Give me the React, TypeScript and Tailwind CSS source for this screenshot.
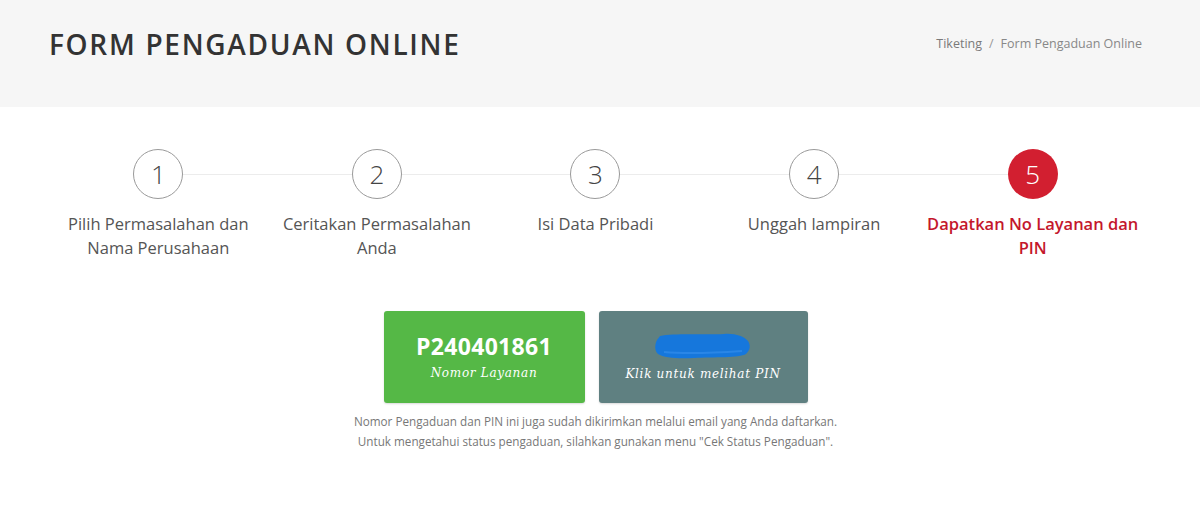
const steps = [
  { no: 1, label: ["Pilih Permasalahan dan", "Nama Perusahaan"] },
  { no: 2, label: ["Ceritakan Permasalahan", "Anda"] },
  { no: 3, label: ["Isi Data Pribadi"] },
  { no: 4, label: ["Unggah lampiran"] },
  { no: 5, label: ["Dapatkan No Layanan dan", "PIN"] },
];

function Step({ no, label, last }: { no: number; label: string[]; last: boolean }) {
  const active = no === 5;
  return (
    <div className="relative flex flex-col items-center">
      {!last && <div className="absolute left-1/2 top-[25px] h-px w-full bg-[#ececec]" />}
      <div
        className={`relative z-10 flex h-[50px] w-[50px] items-center justify-center rounded-full text-[26px] font-light ${
          active ? "bg-[#d21f30] text-white" : "border border-[#9a9a9a] bg-white text-[#444]"
        }`}
      >
        {no}
      </div>
      <div
        className={`mt-[13px] text-center text-[16.5px] leading-[24px] ${
          active ? "font-semibold text-[#c4172c]" : "text-[#555]"
        }`}
      >
        {label.map((l) => (
          <div key={l}>{l}</div>
        ))}
      </div>
    </div>
  );
}

export default function App() {
  return (
    <div className="min-h-[515px] w-[1200px] bg-white font-['Open_Sans',sans-serif]">
      <div className="h-[107px] bg-[#f6f6f6]">
        <div className="ml-[49px] flex h-[88px] w-[1093px] items-center justify-between">
          <h1 className="text-[28px] font-semibold tracking-[1.7px] text-[#333]">FORM PENGADUAN ONLINE</h1>
          <div className="flex items-center gap-[7px] text-[12.5px] text-[#7a7a7a]">
            <span>Tiketing</span>
            <span className="text-[#999]">/</span>
            <span className="text-[#888]">Form Pengaduan Online</span>
          </div>
        </div>
      </div>

      <div className="ml-[49px] w-[1093px]">
        <div className="mt-[42px] grid grid-cols-5">
          {steps.map((s, i) => (
            <Step key={s.no} no={s.no} label={s.label} last={i === steps.length - 1} />
          ))}
        </div>

        <div className="mt-[51px] flex justify-center gap-[14px]">
          <div className="flex h-[92px] w-[201px] flex-col items-center justify-center rounded-[3px] bg-[#55b846] text-white shadow-[0_1px_2px_rgba(0,0,0,0.15)]">
            <div className="text-[23px] font-bold leading-[28px] tracking-[0.3px]">P240401861</div>
            <div className="mt-[4px] font-['DejaVu_Serif',serif] text-[12px] italic tracking-[0.7px]">Nomor Layanan</div>
          </div>
          <div className="flex h-[92px] w-[209px] flex-col items-center justify-center rounded-[3px] bg-[#5f8081] text-white shadow-[0_1px_2px_rgba(0,0,0,0.15)]">
            <svg width="98" height="28" viewBox="0 0 98 28" className="mb-[5px]">
              <path
                d="M6 4 C20 1, 50 3, 70 2 C80 1, 90 4, 94 9 C97 14, 96 18, 92 22 C85 26, 60 25, 40 26 C25 27, 10 26, 4 22 C0 18, 1 12, 3 8 Z"
                fill="#1677dc"
              />
              <path d="M10 20 C30 22, 60 21, 88 19" stroke="#2a86e6" strokeWidth="2" fill="none" />
            </svg>
            <div className="font-['DejaVu_Serif',serif] text-[12px] italic tracking-[0.7px]">Klik untuk melihat PIN</div>
          </div>
        </div>

        <div className="mt-[8px] text-center text-[11.7px] leading-[20px] text-[#777]">
          <div>Nomor Pengaduan dan PIN ini juga sudah dikirimkan melalui email yang Anda daftarkan.</div>
          <div>Untuk mengetahui status pengaduan, silahkan gunakan menu "Cek Status Pengaduan".</div>
        </div>
      </div>
    </div>
  );
}
